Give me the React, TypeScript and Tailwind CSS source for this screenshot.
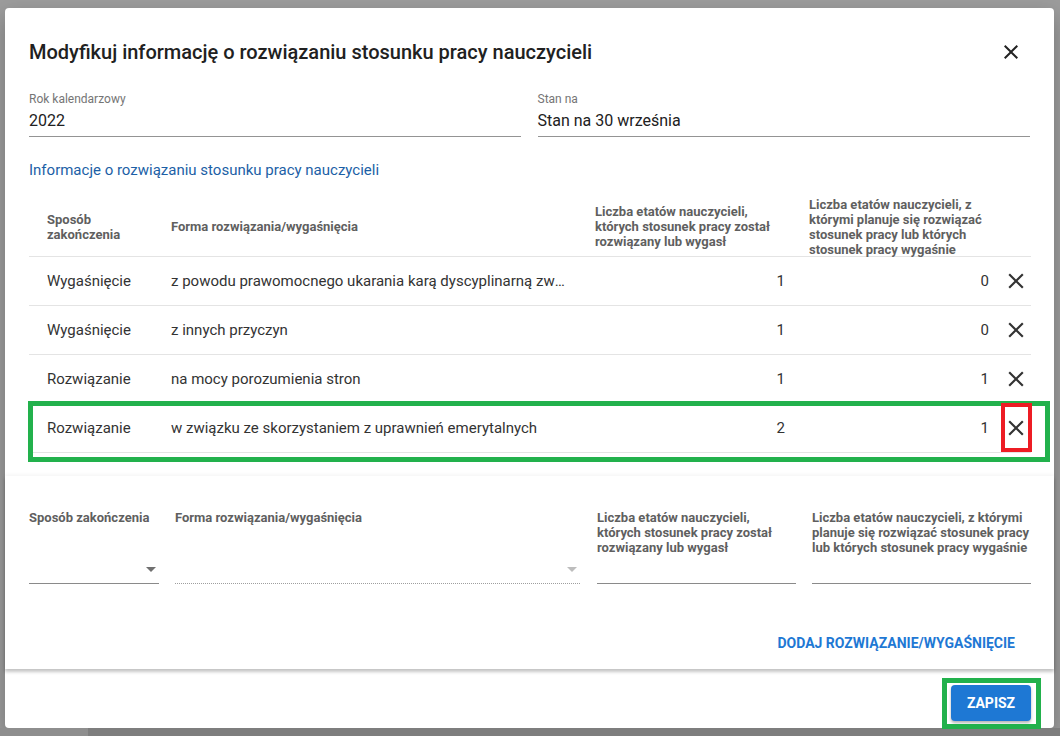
import React from "react";

const rows = [
  { sposob: "Wygaśnięcie", forma: "z powodu prawomocnego ukarania karą dyscyplinarną zwolnienia z pracy", a: 1, b: 0 },
  { sposob: "Wygaśnięcie", forma: "z innych przyczyn", a: 1, b: 0 },
  { sposob: "Rozwiązanie", forma: "na mocy porozumienia stron", a: 1, b: 1 },
  { sposob: "Rozwiązanie", forma: "w związku ze skorzystaniem z uprawnień emerytalnych", a: 2, b: 1 },
];

function CloseIcon({ className }: { className?: string }) {
  return (
    <svg viewBox="0 0 24 24" className={className} fill="currentColor">
      <path d="M19 6.41L17.59 5 12 10.59 6.41 5 5 6.41 10.59 12 5 17.59 6.41 19 12 13.41 17.59 19 19 17.59 13.41 12z" />
    </svg>
  );
}

function Arrow({ light }: { light?: boolean }) {
  return (
    <span
      className={
        "mb-[11px] mr-[3px] h-0 w-0 border-x-[5px] border-t-[5px] border-x-transparent " +
        (light ? "border-t-[#bdbdbd]" : "border-t-[#707070]")
      }
    />
  );
}

export default function App() {
  return (
    <div className="relative flex h-[736px] w-[1060px] flex-col overflow-hidden bg-[#9c9c9c] font-['Roboto',sans-serif]">
      <div className="flex pl-[5px] pt-[8px]">
        {/* ── Dialog ── */}
        <div className="flex h-[720px] w-[1049px] flex-col rounded-[4px] bg-white shadow-[0_8px_20px_rgba(0,0,0,0.25)]">
          {/* Title */}
          <div className="flex items-center justify-between pl-[24px] pr-[31px] pt-[30px]">
            <h2 className="text-[20px] font-medium leading-[28px] text-[#212121]">
              Modyfikuj informację o rozwiązaniu stosunku pracy nauczycieli
            </h2>
            <CloseIcon className="h-[24px] w-[24px] text-[#222]" />
          </div>

          <div className="px-[24px]">
            {/* Read-only fields */}
            <div className="mt-[26px] flex gap-[17px]">
              <div className="w-[492px] border-b border-[#949494] pb-[3px]">
                <div className="text-[12px] leading-[14px] text-[#757575]">Rok kalendarzowy</div>
                <div className="mt-[3px] text-[16px] leading-[24px] text-[#212121]">2022</div>
              </div>
              <div className="w-[493px] border-b border-[#949494] pb-[3px]">
                <div className="text-[12px] leading-[14px] text-[#757575]">Stan na</div>
                <div className="mt-[3px] text-[16px] leading-[24px] text-[#212121]">Stan na 30 września</div>
              </div>
            </div>

            <div className="mt-[23px] text-[15px] leading-[20px] text-[#1c5fa6]">
              Informacje o rozwiązaniu stosunku pracy nauczycieli
            </div>

            {/* Table */}
            <div className="mt-[17px] w-[1002px]">
              <div className="flex h-[60px] items-center whitespace-nowrap border-b border-[#e4e4e4] text-[13px] font-bold leading-[15px] text-[#5f5f5f]">
                <div className="w-[126px] pl-[18px] pr-[8px]">Sposób<br />zakończenia</div>
                <div className="w-[424px] pl-[16px]">Forma rozwiązania/wygaśnięcia</div>
                <div className="w-[214px] pl-[16px]">
                  Liczba etatów nauczycieli,<br />których stosunek pracy został<br />rozwiązany lub wygasł
                </div>
                <div className="w-[204px] pl-[16px]">
                  Liczba etatów nauczycieli, z<br />którymi planuje się rozwiązać<br />stosunek pracy lub których<br />stosunek pracy wygaśnie
                </div>
                <div className="w-[34px]" />
              </div>
              {rows.map((r, i) => (
                <div key={i} className="flex h-[49px] items-center border-b border-[#e4e4e4] text-[15px] text-[#333]">
                  <div className="w-[126px] pl-[18px]">{r.sposob}</div>
                  <div className="w-[424px] pl-[16px] pr-[14px]">
                    <div className="truncate">{r.forma}</div>
                  </div>
                  <div className="w-[214px] pr-[8px] text-right">{r.a}</div>
                  <div className="w-[204px] pr-[8px] text-right">{r.b}</div>
                  <div className="flex w-[34px] justify-center pl-[4px]">
                    <CloseIcon className="h-[26px] w-[26px] shrink-0 text-[#333]" />
                  </div>
                </div>
              ))}
            </div>
          </div>

          {/* Add form card */}
          <div className="mt-[23px] h-[193px] bg-white pt-[34px] shadow-[0_-1px_4px_rgba(0,0,0,0.05),0_3px_3px_rgba(0,0,0,0.22)]">
            <div className="flex whitespace-nowrap pl-[24px] text-[13px] font-bold leading-[15px] text-[#5f5f5f]">
              <div className="w-[130px]">
                <div className="h-[45px]">Sposób zakończenia</div>
                <div className="flex h-[29px] items-end justify-end border-b border-[#8a8a8a]">
                  <Arrow />
                </div>
              </div>
              <div className="ml-[16px] w-[405px]">
                <div className="h-[45px]">Forma rozwiązania/wygaśnięcia</div>
                <div className="flex h-[29px] items-end justify-end border-b border-dotted border-[#9e9e9e]">
                  <Arrow light />
                </div>
              </div>
              <div className="ml-[17px] w-[199px]">
                <div className="h-[45px]">
                  Liczba etatów nauczycieli,<br />których stosunek pracy został<br />rozwiązany lub wygasł
                </div>
                <div className="h-[29px] border-b border-[#8a8a8a]" />
              </div>
              <div className="ml-[16px] w-[219px]">
                <div className="h-[45px]">
                  Liczba etatów nauczycieli, z którymi<br />planuje się rozwiązać stosunek pracy<br />lub których stosunek pracy wygaśnie
                </div>
                <div className="h-[29px] border-b border-[#8a8a8a]" />
              </div>
            </div>
            <div className="mt-[49px] flex justify-end pr-[39px]">
              <span className="text-[14px] font-bold uppercase leading-[20px] text-[#1e78d4]">
                Dodaj rozwiązanie/wygaśnięcie
              </span>
            </div>
          </div>

          {/* Footer */}
          <div className="flex justify-end pr-[23px] pt-[16px]">
            <button className="h-[36px] w-[80px] rounded-[4px] bg-[#1e78d4] text-[14px] font-bold uppercase text-white shadow-[0_2px_3px_rgba(0,0,0,0.3)]">
              Zapisz
            </button>
          </div>
        </div>
      </div>

      {/* strip of the page behind the overlay */}
      <div className="mt-auto flex h-[8px]">
        <div className="w-[88px] bg-[#8e8e8e]" />
        <div className="flex-1 bg-[#7e7e7e]" />
      </div>

      {/* annotation frames drawn over the screenshot */}
      <div className="absolute left-[28px] top-[401px] h-[61px] w-[1022px] border-[5px] border-[#22b14c]" />
      <div className="absolute left-[1001px] top-[403px] h-[49px] w-[31px] border-4 border-[#ed1c24]" />
      <div className="absolute left-[942px] top-[678px] h-[51px] w-[99px] border-[5px] border-[#22b14c]" />
    </div>
  );
}
